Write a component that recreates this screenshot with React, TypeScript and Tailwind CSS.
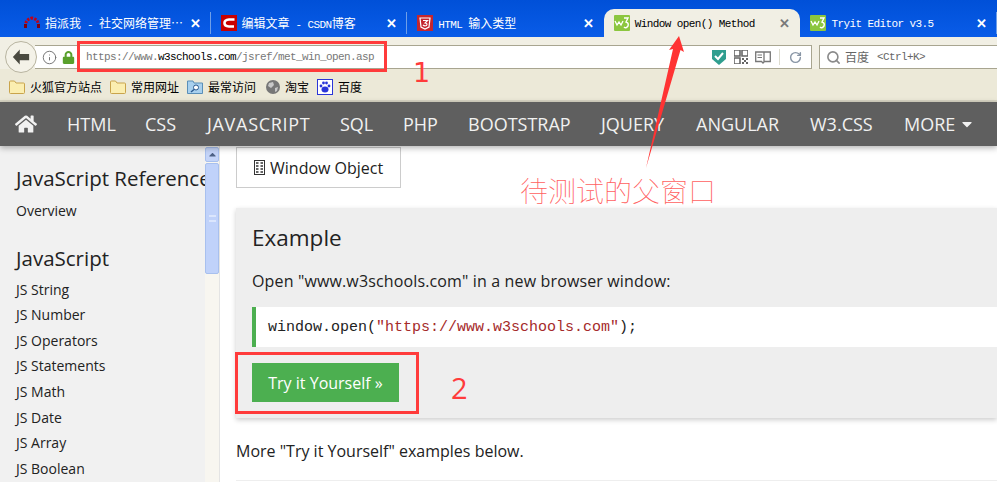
import React from 'react';
import { Info, RotateCw, Search } from 'lucide-react';
import { FaCaretDown, FaCaretUp, FaHome, FaLock } from 'react-icons/fa';

const W3Icon = () => (
  <svg width="16" height="16" viewBox="0 0 16 16" className="shrink-0">
    <rect width="16" height="16" rx="1" fill="#8cc63f" />
    <path d="M1 6 L3 10 L5 7 L7 10 L9 6" stroke="#fff" strokeWidth="1.3" fill="none" />
    <path d="M10 3 H14 L12 7 Q15 8 14 11 Q12 14 10 12" stroke="#fff" strokeWidth="1.4" fill="none" />
  </svg>
);

const ArcIcon = () => (
  <svg width="16" height="16" viewBox="0 0 16 16" className="shrink-0">
    <path d="M1.5 12 V10 Q2 4 8 3 Q14 4 14.5 10 V12" stroke="#c00018" strokeWidth="3" strokeDasharray="2.4 1.2" fill="none" />
    <rect x="0" y="9" width="3" height="4" fill="#800010" />
    <rect x="13" y="9" width="3" height="4" fill="#800010" />
  </svg>
);

const CsdnIcon = () => (
  <svg width="16" height="16" viewBox="0 0 16 16" className="shrink-0">
    <rect width="16" height="16" fill="#c80000" />
    <path d="M13.5 4.5 H8 Q3.5 4.8 3.5 8 Q3.5 11.2 8 11.5 H13" stroke="#fff" strokeWidth="2.6" fill="none" />
  </svg>
);

const HtmlIcon = () => (
  <svg width="16" height="16" viewBox="0 0 16 16" className="shrink-0">
    <rect width="16" height="16" fill="#c4262e" />
    <path d="M3 3 H13 L12 12 L8 14 L4 12 Z" stroke="#fff" strokeWidth="1.2" fill="none" />
    <path d="M6 5.5 H10.5 L8 8 Q11 8.5 9.5 10.5 Q7.5 11.5 6 10" stroke="#fff" strokeWidth="1.2" fill="none" />
  </svg>
);

const Folder = () => (
  <svg width="16" height="14" viewBox="0 0 16 14" className="shrink-0">
    <path d="M0.5 3 V12.5 Q0.5 13.5 1.5 13.5 H14.5 Q15.5 13.5 15.5 12.5 V4 Q15.5 3 14.5 3 H7 L5.5 1 H1.5 Q0.5 1 0.5 2 Z" fill="#fbeeb0" stroke="#c9a44c" />
  </svg>
);

function Zh({ children }: { children: React.ReactNode }) {
  return <span className="text-[12px] tracking-normal [font-family:'Noto_Sans_CJK_SC',sans-serif]">{children}</span>;
}

const tabs = [
  { icon: <ArcIcon />, title: <><Zh>指派我</Zh> - <Zh>社交网络管理…</Zh></>, sep: true },
  { icon: <CsdnIcon />, title: <><Zh>编辑文章</Zh> - CSDN<Zh>博客</Zh></>, sep: true },
  { icon: <HtmlIcon />, title: <>HTML <Zh>输入类型</Zh></> },
  { icon: <W3Icon />, title: <>Window open() Method</>, active: true },
  { icon: <W3Icon />, title: <>Tryit Editor v3.5</>, sep: true },
];

const navItems = [
  { label: 'HTML', width: 'w-[78px]' },
  { label: 'CSS', width: 'w-[62px]' },
  { label: 'JAVASCRIPT', width: 'w-[133px] tracking-[0.7px]' },
  { label: 'SQL', width: 'w-[63px]' },
  { label: 'PHP', width: 'w-[65px]' },
  { label: 'BOOTSTRAP', width: 'w-[133px]' },
  { label: 'JQUERY', width: 'w-[95px]' },
  { label: 'ANGULAR', width: 'w-[114px]' },
  { label: 'W3.CSS', width: 'w-[94px]' },
];
const jsLinks = ['JS String', 'JS Number', 'JS Operators', 'JS Statements', 'JS Math', 'JS Date', 'JS Array', 'JS Boolean'];

const Tab = ({ icon, title, active, sep }: { icon: React.ReactNode; title: React.ReactNode; active?: boolean; sep?: boolean }) => (
  <div
    className={
      active
        ? 'relative z-10 flex h-[28px] w-[197px] items-center rounded-t-[10px] bg-[#f1efe4] pl-[10px] pr-[10px] text-black'
        : 'flex h-[28px] w-[197px] items-center pl-[10px] text-white'
    }
  >
    {icon}
    <span className="ml-[5px] flex-1 whitespace-nowrap pt-[1px] text-[11px] leading-[16px] tracking-[-0.6px] [font-family:'Liberation_Mono',monospace]">{title}</span>
    <span className={active ? 'text-[13px] font-bold leading-none text-[#7a7a7a]' : 'mr-[9px] text-[13px] font-bold leading-none text-white'}>✕</span>
    {!active && <span className={sep ? 'h-[22px] w-px bg-[#6f9fe8]' : 'h-[22px] w-px'} />}
  </div>
);

export default function App() {
  return (
    <div className="relative h-[482px] w-[997px] overflow-hidden bg-white [font-family:'Open_Sans',sans-serif]">
      <div className="flex h-[37px] items-end bg-gradient-to-b from-[#0050d8] to-[#0a5ce8] pl-[14px]">
        {tabs.map((t, i) => (
          <Tab key={i} icon={t.icon} title={t.title} active={t.active} sep={t.sep} />
        ))}
      </div>

      <div className="flex h-[32px] items-end bg-[#f1efe4] pl-[5px]">
        <div className="relative z-10 mb-[-4px] flex h-[32px] w-[32px] items-center justify-center rounded-full border border-[#b8b4a0] bg-[#f4f2e8]">
          <svg width="20" height="18" viewBox="0 0 16 14">
            <path d="M7 1 L1.5 7 L7 13 V9.5 H14.5 V4.5 H7 Z" fill="#4a4a40" />
          </svg>
        </div>
        <div className="ml-[-2px] flex h-[24px] w-[777px] items-center border-y border-r border-[#a8a590] bg-white pl-[7px]">
          <Info size={15} strokeWidth={1.5} className="text-[#707070]" />
          <FaLock size={13} className="ml-[5px] text-[#5aa02c]" />
          <span className="ml-[11px] text-[11px] tracking-[-0.6px] text-[#777] [font-family:'Liberation_Mono',monospace]">
            https://www.<span className="text-black">w3schools.com</span>/jsref/met_win_open.asp
          </span>
          <div className="ml-auto flex items-center pr-[9px]">
            <svg width="14" height="16" viewBox="0 0 14 16">
              <path d="M0 1 H14 V10 L7 16 L0 10 Z" fill="#2f9e8f" />
              <path d="M3 7 L6 10 L11 4" stroke="#fff" strokeWidth="2" fill="none" />
            </svg>
            <svg width="14" height="14" viewBox="0 0 14 14" className="ml-[8px]">
              <path d="M0 0 H6 V6 H0 Z M8 0 H14 V6 H8 Z M0 8 H6 V14 H0 Z" fill="none" stroke="#666" strokeWidth="1.6" />
              <path d="M8 8 H10 V10 H8 Z M12 8 H14 V10 H12 Z M10 10 H12 V12 H10 Z M8 12 H10 V14 H8 Z M12 12 H14 V14 H12 Z" fill="#666" />
            </svg>
            <svg width="16" height="13" viewBox="0 0 16 13" className="ml-[7px]">
              <path d="M0.7 1 H15.3 V10.5 H9.5 L8 12 L6.5 10.5 H0.7 Z M9 1 V10.5" fill="#fff" stroke="#777" strokeWidth="1.3" />
              <path d="M2.5 4 H7 M2.5 6.5 H7" stroke="#777" />
            </svg>
            <div className="ml-[8px] h-[16px] w-px bg-[#dddccf]" />
            <RotateCw size={13} strokeWidth={2.6} className="ml-[9px] text-[#8895a5]" />
          </div>
        </div>
        <div className="ml-[7px] flex h-[24px] flex-1 items-center border-y border-l border-[#a8a590] bg-white pl-[6px] text-[12px] text-[#666]">
          <Search size={15} strokeWidth={2.6} className="text-[#8a8a8a]" />
          <span className="ml-[4px] [font-family:'Noto_Sans_CJK_SC',sans-serif]">百度</span>
          <span className="ml-[8px] text-[11px] tracking-[-0.6px] [font-family:'Liberation_Mono',monospace]">&lt;Ctrl+K&gt;</span>
        </div>
      </div>

      <div className="flex h-[33px] items-center gap-[5px] border-b-2 border-[#d8d5c4] bg-[#ece9d8] pl-[9px] pt-[5px] text-[12px] text-black [font-family:'Noto_Sans_CJK_SC',sans-serif]">
        <Folder />
        <span className="mr-[3px]">火狐官方站点</span>
        <Folder />
        <span className="mr-[3px]">常用网址</span>
        <svg width="16" height="14" viewBox="0 0 16 14" className="shrink-0">
          <path d="M0.5 1 H6 L7 3 H15.5 V13.5 H0.5 Z" fill="#a8d0ee" stroke="#5a8fb8" />
          <circle cx="9" cy="7.5" r="2.5" fill="#fff" stroke="#2a5a90" />
          <path d="M7 9.5 L4 12" stroke="#2a5a90" strokeWidth="1.5" />
        </svg>
        <span className="mr-[5px]">最常访问</span>
        <svg width="14" height="14" viewBox="0 0 14 14" className="shrink-0">
          <circle cx="7" cy="7" r="7" fill="#777" />
          <path d="M3 3 L7 2 L8 5 L5 8 L2 6 Z M9 8 L12 7 L11 11 L9 12 Z" fill="#c8c8c8" />
        </svg>
        <span className="mr-[3px]">淘宝</span>
        <svg width="16" height="16" viewBox="0 0 16 16" className="shrink-0">
          <rect x="0.5" y="0.5" width="15" height="15" fill="#fff" stroke="#2a35d8" />
          <ellipse cx="8" cy="10.5" rx="3.5" ry="3" fill="#2a35d8" />
          <circle cx="4" cy="7" r="1.4" fill="#2a35d8" />
          <circle cx="12" cy="7" r="1.4" fill="#2a35d8" />
          <circle cx="6.5" cy="4" r="1.4" fill="#2a35d8" />
          <circle cx="9.5" cy="4" r="1.4" fill="#2a35d8" />
        </svg>
        <span>百度</span>
      </div>

      <div className="relative z-10 flex h-[44px] items-center bg-[#5f5f5f] pl-[15px] text-[18px] text-[#f1f1f1] shadow-[0_2px_6px_rgba(0,0,0,0.3)]">
        <div className="w-[52px]">
          <FaHome size={22} />
        </div>
        {navItems.map((n) => (
          <span key={n.label} className={n.width}>
            {n.label}
          </span>
        ))}
        <span className="flex items-center gap-[4px]">
          MORE <FaCaretDown size={16} />
        </span>
      </div>

      <div className="flex h-[336px]">
        <aside className="w-[205px] overflow-hidden whitespace-nowrap bg-[#f1f1f1] pl-[16px] pt-[18px] text-[#222]">
          <h2 className="text-[20.5px] leading-[28px] text-[#222]">JavaScript Reference</h2>
          <div className="mt-[6px] text-[14px] leading-[25.6px]">Overview</div>
          <h2 className="mt-[20px] text-[20.5px] leading-[28px]">JavaScript</h2>
          <div className="mt-[5px] text-[14px] leading-[25.6px]">
            {jsLinks.map((l) => (
              <div key={l}>{l}</div>
            ))}
          </div>
        </aside>
        <div className="flex w-[15px] flex-col border-r border-[#e4e4e4] bg-[#f8f6f0] pt-[1px]">
          <div className="flex h-[15px] items-center justify-center rounded-[2px] border border-[#a8c0ee] bg-[#c4d4f8] text-[#4d6185]">
            <FaCaretUp size={11} />
          </div>
          <div className="mt-[1px] flex h-[111px] items-center justify-center rounded-[2px] border border-[#a8c0ee] bg-[#c0d2fa]">
            <div className="h-[7px] w-[7px] border-y-2 border-[#dbe6fd]" />
          </div>
        </div>

        <main className="flex-1 pl-[16px] pt-[1px] text-[16px] text-[#222]">
          <div className="flex h-[41px] w-[165px] items-center gap-[5px] border border-[#cccccc] pl-[17px]">
            <svg width="11" height="15" viewBox="0 0 11 15" className="shrink-0">
              <rect x="0.5" y="0.5" width="10" height="14" fill="#fff" stroke="#333" />
              <path d="M2 3 H4.5 M6.5 3 H9 M2 6 H4.5 M6.5 6 H9 M2 9 H4.5 M6.5 9 H9 M2 12 H4.5 M6.5 12 H9" stroke="#333" strokeWidth="1.4" />
            </svg>
            Window Object
          </div>
          <section className="mt-[20px] h-[210px] bg-[#eeeeee] pl-[16px] pt-[14px] shadow-[0_2px_5px_rgba(0,0,0,0.2)]">
            <h2 className="text-[22.5px] leading-[32px]">Example</h2>
            <p className="mt-[15px] leading-[24px] tracking-[0.14px]">Open "www.w3schools.com" in a new browser window:</p>
            <div className="mt-[14px] flex h-[40px] items-center border-l-4 border-[#4caf50] bg-white pl-[12px] pt-[3px] text-[15px] text-[#222] [font-family:'Liberation_Mono',monospace]">
              window.open(<span className="text-[#a52a2a]">"https://www.w3schools.com"</span>);
            </div>
            <button className="mt-[16px] h-[39px] w-[147px] bg-[#4caf50] text-[16px] text-white">Try it Yourself »</button>
          </section>
          <p className="mt-[21px] leading-[24px]">More "Try it Yourself" examples below.</p>
          <hr className="mt-[17px] border-[#eeeeee]" />
        </main>
      </div>

      {/* annotations drawn on the screenshot */}
      <div className="absolute left-[77px] top-[41px] z-20 h-[31px] w-[310px] border-[3px] border-[#ff3b3b]" />
      <div className="absolute left-[235px] top-[352px] z-20 h-[62px] w-[184px] border-[3px] border-[#ff3b3b]" />
      <span className="absolute left-[413px] top-[55px] z-20 text-[27px] leading-[36px] text-[#ff3b3b] [font-family:'DejaVu_Sans',sans-serif]">1</span>
      <span className="absolute left-[451px] top-[369px] z-20 text-[29px] leading-[38px] text-[#ff3b3b]">2</span>
      <svg className="absolute left-[640px] top-[30px] z-20" width="50" height="142" viewBox="0 0 50 142">
        <path d="M39 6 L44 22 L40.5 20 L6 138 L33 19 L29 20 Z" fill="#ff3333" />
      </svg>
      <span className="absolute left-[520px] top-[172px] z-20 text-[28px] leading-[36px] text-[#ff6060] font-thin [font-family:'Noto_Sans_CJK_SC',sans-serif]">待测试的父窗口</span>
    </div>
  );
}
